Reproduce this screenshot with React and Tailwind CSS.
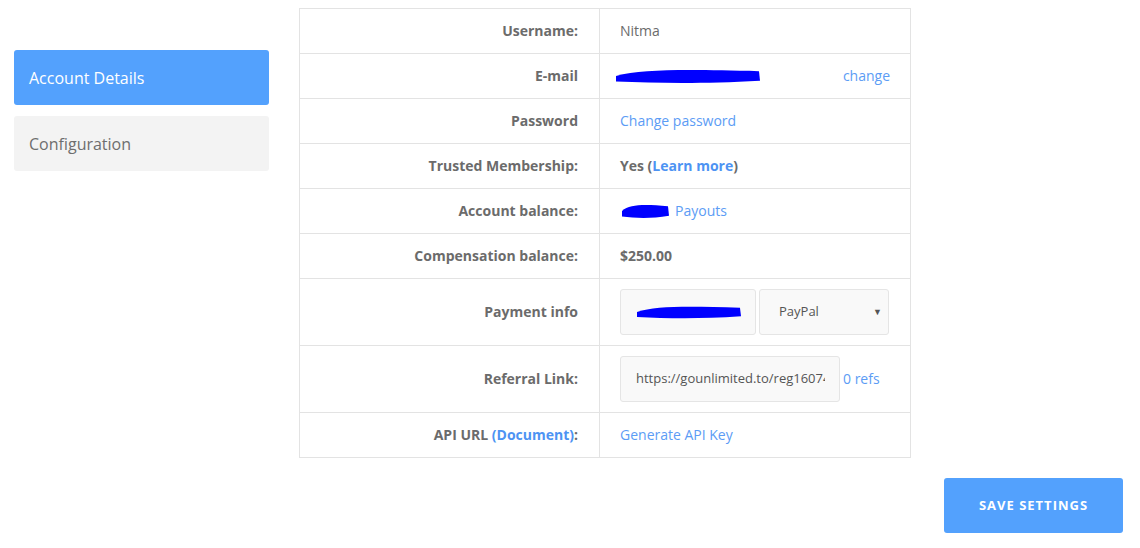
import React from "react";

const font = { fontFamily: '"Open Sans", "Noto Sans", sans-serif' };

function Row({ label, children, h = "h-[45px]", last }) {
  return (
    <div className={`flex ${last ? "" : "border-b border-[#e3e3e3]"} ${h}`}>
      <div className="w-[300px] shrink-0 border-r border-[#e3e3e3] flex items-center justify-end pr-[21px] pb-[1px] text-[14px] font-bold text-[#6b6b6b]">
        {label}
      </div>
      <div className="flex-1 flex items-center pl-[20px] pr-[20px] pb-[1px] text-[14px] text-[#6b6b6b]">{children}</div>
    </div>
  );
}

function Scribble({ w, h }) {
  return (
    <svg width={w} height={h} viewBox={`0 0 ${w} ${h}`}>
      <path
        d={`M2 ${h * 0.5} C ${w * 0.2} ${h * 0.05}, ${w * 0.5} ${h * 0.1}, ${w - 3} ${h * 0.2} L ${w - 2} ${h * 0.8} C ${w * 0.6} ${h * 1.0}, ${w * 0.3} ${h * 0.95}, 2 ${h * 0.85} Z`}
        fill="#0000ff"
      />
    </svg>
  );
}

export default function App() {
  return (
    <div className="relative w-[1140px] h-[548px] bg-white" style={font}>
      <div className="flex pt-[8px]">
        <div className="w-[255px] ml-[14px] mt-[42px] flex flex-col gap-[11px]">
          <div className="h-[55px] rounded-[3px] bg-[#53a1fd] text-white text-[16px] flex items-center pl-[15px]">
            Account Details
          </div>
          <div className="h-[55px] rounded-[3px] bg-[#f3f3f3] text-[#6e6e6e] text-[16px] flex items-center pl-[15px]">
            Configuration
          </div>
        </div>
        <div className="ml-[30px] w-[612px] border border-[#e3e3e3]">
          <Row label="Username:">Nitma</Row>
          <Row label="E-mail">
            <div className="-ml-[6px]"><Scribble w={148} h={16} /></div>
            <span className="ml-auto text-[#5c9cf5]">change</span>
          </Row>
          <Row label="Password">
            <span className="text-[#5c9cf5]">Change password</span>
          </Row>
          <Row label="Trusted Membership:">
            <span className="font-bold">
              Yes (<span className="text-[#4d93f3]">Learn more</span>)
            </span>
          </Row>
          <Row label="Account balance:">
            <Scribble w={51} h={16} />
            <span className="ml-[4px] text-[#5c9cf5]">Payouts</span>
          </Row>
          <Row label="Compensation balance:">
            <span className="font-bold">$250.00</span>
          </Row>
          <Row label="Payment info" h="h-[67px]">
            <div className="w-[136px] h-[46px] rounded-[3px] border border-[#e5e5e5] bg-[#f9f9f9] flex items-center pl-[14px]">
              <Scribble w={108} h={14} />
            </div>
            <div className="ml-[3px] w-[130px] h-[46px] rounded-[3px] border border-[#e5e5e5] bg-[#f9f9f9] flex items-center pl-[19px] pr-[6px] text-[13px] text-[#555]">
              PayPal
              <span className="ml-auto text-[9px] text-[#555]">▼</span>
            </div>
          </Row>
          <Row label="Referral Link:" h="h-[67px]">
            <div className="w-[220px] h-[46px] rounded-[3px] border border-[#e5e5e5] bg-[#f9f9f9] flex items-center pl-[15px] pr-[14px] text-[13px] text-[#555]">
              <span className="block overflow-hidden whitespace-nowrap">https://gounlimited.to/reg16074</span>
            </div>
            <span className="ml-[3px] text-[#5c9cf5]">0 refs</span>
          </Row>
          <Row label={<span>API URL <span className="text-[#4d93f3]">(Document)</span>:</span>} h="h-[44px]" last>
            <span className="text-[#5c9cf5]">Generate API Key</span>
          </Row>
        </div>
      </div>
      <div className="flex justify-end pr-[17px] mt-[20px]">
        <div className="w-[179px] h-[55px] rounded-[3px] bg-[#53a1fd] text-white text-[13px] font-bold tracking-[1px] flex items-center justify-center">
          SAVE SETTINGS
        </div>
      </div>
    </div>
  );
}
